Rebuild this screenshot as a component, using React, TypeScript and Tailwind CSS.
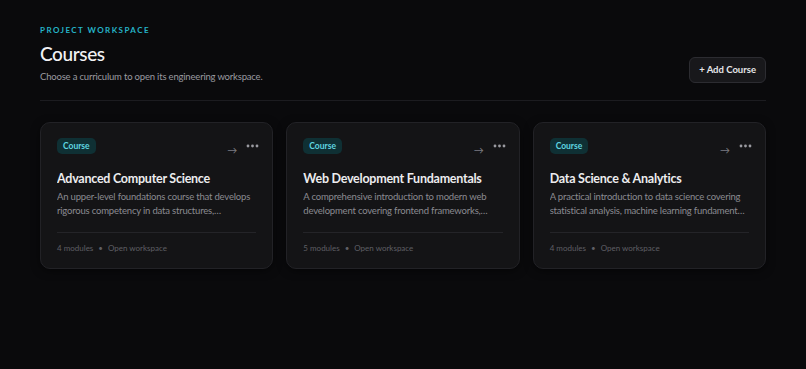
const courses = [
  {
    title: "Advanced Computer Science",
    description:
      "An upper-level foundations course that develops rigorous competency in data structures, algorithms, and systems design.",
    modules: 4,
  },
  {
    title: "Web Development Fundamentals",
    description:
      "A comprehensive introduction to modern web development covering frontend frameworks, backend services and deployment.",
    modules: 5,
  },
  {
    title: "Data Science & Analytics",
    description:
      "A practical introduction to data science covering statistical analysis, machine learning fundamentals and visualization.",
    modules: 4,
  },
];

function CourseCard({ title, description, modules }: { title: string; description: string; modules: number }) {
  return (
    <div className="rounded-[10px] border border-[#222226] bg-[#141416] px-4 pt-[15px] pb-[14px] shadow-[0_2px_8px_rgba(0,0,0,0.5)]">
      <div className="flex items-start justify-between">
        <span className="rounded-[5px] bg-[#0f3034] px-[6px] py-[2px] text-[8.5px] font-bold leading-[12px] text-[#5fd6e0]">
          Course
        </span>
        <div className="mr-[-3px] flex items-center gap-[9px]">
          <span className="mt-[7px] text-[10px] leading-none text-[#7c7c82]">→</span>
          <svg width="13" height="4" viewBox="0 0 13 4" className="mt-[-1px]" aria-hidden="true">
            <circle cx="2" cy="2" r="1.4" fill="#9a9aa0" />
            <circle cx="6.5" cy="2" r="1.4" fill="#9a9aa0" />
            <circle cx="11" cy="2" r="1.4" fill="#9a9aa0" />
          </svg>
        </div>
      </div>
      <h2 className="mt-[15px] truncate text-[12.5px] font-bold leading-[18px] tracking-[-0.02em] text-[#ececee]">
        {title}
      </h2>
      <p className="mt-[2px] line-clamp-2 text-[9.5px] leading-[14px] tracking-[-0.02em] text-[#8b8b91]">
        {description}
      </p>
      <div className="mt-[14px] border-t border-[#242428]" />
      <div className="mt-[9px] flex items-center gap-[5px] text-[8px] leading-[12px] text-[#5f5f65]">
        <span>{modules} modules</span>
        <span>•</span>
        <span>Open workspace</span>
      </div>
    </div>
  );
}

export default function App() {
  return (
    <div
      className="min-h-[369px] w-full bg-[#0a0a0c] px-10 pt-[24px]"
      style={{ fontFamily: 'Lato, "Noto Sans", sans-serif' }}
    >
      <header className="flex items-end justify-between border-b border-[#1c1c20] pb-[16px]">
        <div>
          <p className="text-[8px] font-bold uppercase leading-[12px] tracking-[0.18em] text-[#25b4c8]">
            Project Workspace
          </p>
          <h1 className="mt-[6px] text-[19px] font-medium leading-[24px] tracking-[-0.02em] text-[#f2f2f4]">
            Courses
          </h1>
          <p className="mt-[4px] text-[9.5px] leading-[14px] tracking-[-0.02em] text-[#9a9aa0]">
            Choose a curriculum to open its engineering workspace.
          </p>
        </div>
        <button className="mb-[1px] h-[26px] rounded-[6px] border border-[#2c2c31] bg-[#18181b] px-[9px] text-[9.5px] font-bold text-[#e6e6e8]">
          + Add Course
        </button>
      </header>

      <main className="mt-[21px] grid grid-cols-3 gap-[13px]">
        {courses.map((c) => (
          <CourseCard key={c.title} {...c} />
        ))}
      </main>
    </div>
  );
}
